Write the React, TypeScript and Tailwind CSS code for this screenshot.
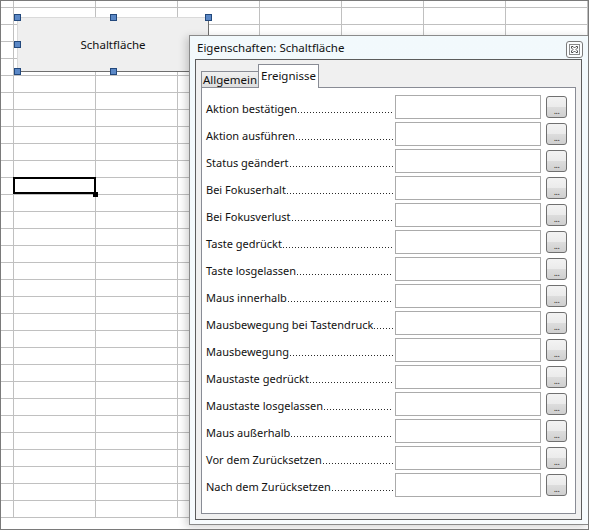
const labels = [
  'Aktion bestätigen',
  'Aktion ausführen',
  'Status geändert',
  'Bei Fokuserhalt',
  'Bei Fokusverlust',
  'Taste gedrückt',
  'Taste losgelassen',
  'Maus innerhalb',
  'Mausbewegung bei Tastendruck',
  'Mausbewegung',
  'Maustaste gedrückt',
  'Maustaste losgelassen',
  'Maus außerhalb',
  'Vor dem Zurücksetzen',
  'Nach dem Zurücksetzen',
]

const font = 'font-["Noto_Sans","Liberation_Sans",sans-serif]'

function Sheet() {
  const rows = Array.from({ length: 31 })
  const cols = Array.from({ length: 7 })
  return (
    <div className="flex flex-col p-[1px]">
      {rows.map((_, r) => (
        <div key={r} className={`flex shrink-0 ${r === 0 ? 'h-[7px]' : 'h-[17px]'}`}>
          <div className="w-[13px] shrink-0 border-b border-r border-[#c0c0c0]" />
          {cols.map((_, c) => (
            <div key={c} className="w-[82px] shrink-0 border-b border-r border-[#c0c0c0]" />
          ))}
        </div>
      ))}
    </div>
  )
}

function Handle({ x, y }: { x: number; y: number }) {
  return (
    <div
      className="absolute h-[7px] w-[7px] border border-[#22487c] bg-[#5b88c6]"
      style={{ left: x - 3, top: y - 3 }}
    />
  )
}

function CloseIcon() {
  return (
    <div className="flex h-[17px] w-[17px] items-center justify-center rounded-[3px] border border-[#7a7a7a] bg-[#fbfdfe]">
      <svg width="11" height="11" viewBox="0 0 11 11">
        <rect x="0.5" y="0.5" width="10" height="10" fill="none" stroke="#8a8a8a" />
        <path
          d="M2.5 2.5 L4 2.5 L5.5 4 L7 2.5 L8.5 2.5 L8.5 4 L7 5.5 L8.5 7 L8.5 8.5 L7 8.5 L5.5 7 L4 8.5 L2.5 8.5 L2.5 7 L4 5.5 L2.5 4 Z"
          fill="#fff"
          stroke="#3c3c3c"
          strokeWidth="0.9"
        />
      </svg>
    </div>
  )
}

// label + dotted leader that fills the rest of the column
function EventRow({ label }: { label: string }) {
  return (
    <div className="flex h-[24px] shrink-0 items-start">
      <div className="mt-[6px] flex h-[16px] w-[187px] text-[11px] leading-[16px] text-[#111]">
        <span className="shrink-0 whitespace-nowrap">{label}</span>
        <span className="mb-[4px] ml-[1px] h-[1px] flex-1 self-end bg-[linear-gradient(to_right,#2a2a2a_1px,transparent_1px)] bg-[length:3px_1px] bg-repeat-x" />
      </div>
      <div className="ml-[2px] h-[24px] w-[146px] border border-[#ababab] bg-white" />
      <div className="ml-[5px] mt-[1px] flex h-[22px] w-[21px] items-end justify-center rounded-[3px] border border-[#707070] bg-[linear-gradient(#f3f3f3_0%,#ebebeb_50%,#dddddd_50%,#cfcfcf_100%)] pb-[2px] text-[9px] leading-[9px] tracking-[-0.5px] text-[#333]">
        ...
      </div>
    </div>
  )
}

function Dialog() {
  return (
    <div className="absolute left-[189px] top-[35px] flex h-[490px] w-[400px] flex-col border border-[#8a8a8a] bg-[linear-gradient(#f2f9fc,#f7fbfd)] shadow-[-3px_2px_8px_rgba(0,0,0,0.18)]">
      <div className="flex h-[23px] shrink-0 items-center justify-between pl-[7px] pr-[5px]">
        <span className="text-[11.5px] text-[#111]">Eigenschaften: Schaltfläche</span>
        <div className="mt-[4px]">
          <CloseIcon />
        </div>
      </div>
      <div className="ml-[5px] flex h-[461px] w-[387px] flex-col border border-[#5c5c5c] bg-[#f0f0f0] px-[5px]">
        <div className="flex h-[27px] shrink-0 items-end pt-[3px]">
          <div className="flex h-[16px] w-[58px] items-center justify-center border border-b-0 border-[#898c95] bg-[linear-gradient(#f0f0f0,#dedede)] text-[11.5px] text-[#111]">
            Allgemein
          </div>
          <div className="relative z-10 -mb-[1px] -ml-[1px] flex h-[24px] w-[61px] items-center justify-center border border-b-0 border-[#898c95] bg-white pb-[2px] text-[11.5px] text-[#111]">
            Ereignisse
          </div>
        </div>
        <div className="flex h-[427px] flex-col gap-[3px] border border-[#898c95] bg-white pl-[4px] pt-[7px]">
          {labels.map((l) => (
            <EventRow key={l} label={l} />
          ))}
        </div>
      </div>
    </div>
  )
}

export default function App() {
  return (
    <div className={`relative h-[530px] w-[589px] overflow-hidden bg-white ${font}`}>
      <Sheet />

      <div className="absolute left-[13px] top-[177px] h-[17px] w-[83px] border-2 border-black" />
      <div className="absolute left-[93px] top-[192px] h-[5px] w-[5px] bg-black" />

      <div className="absolute left-[17px] top-[17px] flex h-[55px] w-[192px] items-center justify-center border border-b-[#6e6e6e] border-l-[#dadada] border-r-[#6e6e6e] border-t-[#dadada] bg-[#efefef] text-[11.5px] text-[#111]">
        Schaltfläche
      </div>
      <Handle x={17} y={17} />
      <Handle x={113} y={17} />
      <Handle x={208} y={17} />
      <Handle x={17} y={44} />
      <Handle x={17} y={71} />
      <Handle x={113} y={71} />
      <Handle x={208} y={71} />

      <Dialog />

      <div className="pointer-events-none absolute inset-0 border border-[#7a7a7a]" />
    </div>
  )
}
